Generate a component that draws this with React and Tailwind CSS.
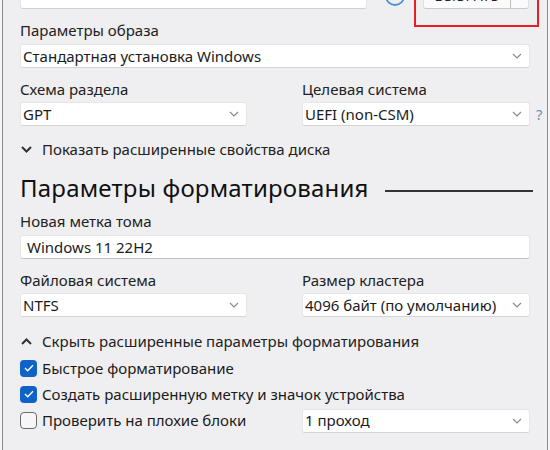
import React from 'react';

const font = { fontFamily: '"Noto Sans", "Open Sans", sans-serif' };

function Chevron({ className = '' }) {
  return (
    <svg width="10" height="6" viewBox="0 0 10 6" className={className}>
      <path d="M1 1l4 4 4-4" fill="none" stroke="currentColor" strokeWidth="1.2" />
    </svg>
  );
}

function Select({ value, className = '' }) {
  return (
    <div
      className={`h-[24px] bg-white border border-[#e6e6e6] border-b-[#d4d4d4] rounded-[3px] flex items-center justify-between pl-[2px] pr-[7px] text-[15px] text-[#1b1b1b] ${className}`}
    >
      <span>{value}</span>
      <Chevron className="text-[#8a8a8a]" />
    </div>
  );
}

function Label({ children, className = '' }) {
  return <div className={`h-[20px] leading-[20px] text-[15px] text-[#222] ${className}`}>{children}</div>;
}

function Toggle({ up, children, className = '' }) {
  return (
    <div className={`h-[20px] flex items-center gap-[10px] text-[15px] text-[#222] ${className}`}>
      <svg width="11" height="7" viewBox="0 0 11 7" className="ml-[1px]">
        <path d={up ? 'M1 6l4.5-4.5L10 6' : 'M1 1l4.5 4.5L10 1'} fill="none" stroke="#333" strokeWidth="2" />
      </svg>
      <span>{children}</span>
    </div>
  );
}

function Check({ checked, children }) {
  return (
    <div className="flex items-center gap-[5px] text-[15px] text-[#1b1b1b]">
      {checked ? (
        <div className="w-[17px] h-[17px] rounded-[4px] bg-[#0f63c6] flex items-center justify-center">
          <svg width="10" height="8" viewBox="0 0 10 8">
            <path d="M1 4l2.7 2.7L9 1.3" fill="none" stroke="white" strokeWidth="1.4" />
          </svg>
        </div>
      ) : (
        <div className="w-[17px] h-[17px] rounded-[4px] border border-[#6b6b6b] bg-[#f6f6f6]" />
      )}
      <span>{children}</span>
    </div>
  );
}

export default function App() {
  return (
    <div style={font} className="w-[550px] h-[450px] bg-[#f5f5f7] overflow-hidden">
      <div className="relative flow-root h-full mx-[2px] w-[546px] border-x border-[#8d8d8d] bg-[#efeff1] pl-[17px] pr-[17px]">
        <div className="absolute left-[411px] top-[-10px] w-[125px] h-[37px] border-2 border-[#ec1c24]" />

        <div className="-mt-[16px] h-[25px] flex items-center">
          <div className="w-[347px] h-[25px] bg-white border border-[#e6e6e6] border-b-[#cfcfcf] rounded-[3px] flex items-end pl-[6px] text-[15px] leading-[20px] text-[#1b1b1b] overflow-hidden">
            <span className="translate-y-[-4px]">Windows 11 22H2.iso</span>
          </div>
          <svg width="22" height="22" viewBox="0 0 22 22" className="ml-[17px] mt-[-2px]">
            <circle cx="11" cy="11" r="9" fill="none" stroke="#4f8fd8" strokeWidth="1.8" />
            <path d="M7 11l3 3 5-5" fill="none" stroke="#4f8fd8" strokeWidth="1.6" />
          </svg>
          <div className="ml-[17px] w-[106px] h-[25px] bg-[#fbfbfb] border border-[#e0e0e0] border-b-[#cacaca] rounded-[3px] flex items-end text-[14px] text-[#222] overflow-hidden">
            <span className="w-[86px] text-center translate-y-[-2px] tracking-[0.5px]">ВЫБРАТЬ</span>
            <span className="h-[22px] w-px bg-[#bdbdbd]" />
            <span className="flex-1 flex justify-center pb-[8px]">
              <svg width="6" height="4" viewBox="0 0 6 4"><path d="M0 0h6L3 4z" fill="#444" /></svg>
            </span>
          </div>
        </div>

        <Label className="mt-[11px]">Параметры образа</Label>
        <Select className="mt-[4px] w-[510px]" value="Стандартная установка Windows" />

        <div className="mt-[11px] grid grid-cols-[227px_228px] gap-x-[55px]">
          <Label>Схема раздела</Label>
          <Label>Целевая система</Label>
          <Select className="mt-[3px]" value="GPT" />
          <div className="mt-[3px] relative">
            <Select value="UEFI (non-CSM)" />
            <span className="absolute left-[234px] top-[1px] text-[15px] text-[#6f8fae]">?</span>
          </div>
        </div>

        <Toggle className="mt-[13px]">Показать расширенные свойства диска</Toggle>

        <div className="mt-[13px] h-[32px] flex items-center w-[513px]">
          <span className="shrink-0 whitespace-nowrap text-[24px] leading-[32px] text-[#111] tracking-[0.2px]">Параметры форматирования</span>
          <span className="ml-[16px] mt-[6px] h-[2px] flex-1 bg-[#333]" />
        </div>

        <Label className="mt-[7px]">Новая метка тома</Label>
        <div className="mt-[4px] w-[510px] h-[24px] bg-white border border-[#e6e6e6] border-b-[#c4c4c4] rounded-[3px] flex items-center pl-[6px] text-[15px] text-[#1b1b1b]">
          Windows 11 22H2
        </div>

        <div className="mt-[11px] grid grid-cols-[227px_228px] gap-x-[55px]">
          <Label>Файловая система</Label>
          <Label>Размер кластера</Label>
          <Select className="mt-[3px]" value="NTFS" />
          <Select className="mt-[3px]" value="4096 байт (по умолчанию)" />
        </div>

        <Toggle up className="mt-[14px]">Скрыть расширенные параметры форматирования</Toggle>

        <div className="mt-[4px] h-[26px] flex items-center">
          <Check checked>Быстрое форматирование</Check>
        </div>
        <div className="h-[26px] flex items-center">
          <Check checked>Создать расширенную метку и значок устройства</Check>
        </div>
        <div className="h-[27px] flex items-center">
          <div className="w-[282px]">
            <Check>Проверить на плохие блоки</Check>
          </div>
          <Select className="w-[228px]" value="1 проход" />
        </div>
      </div>
    </div>
  );
}
